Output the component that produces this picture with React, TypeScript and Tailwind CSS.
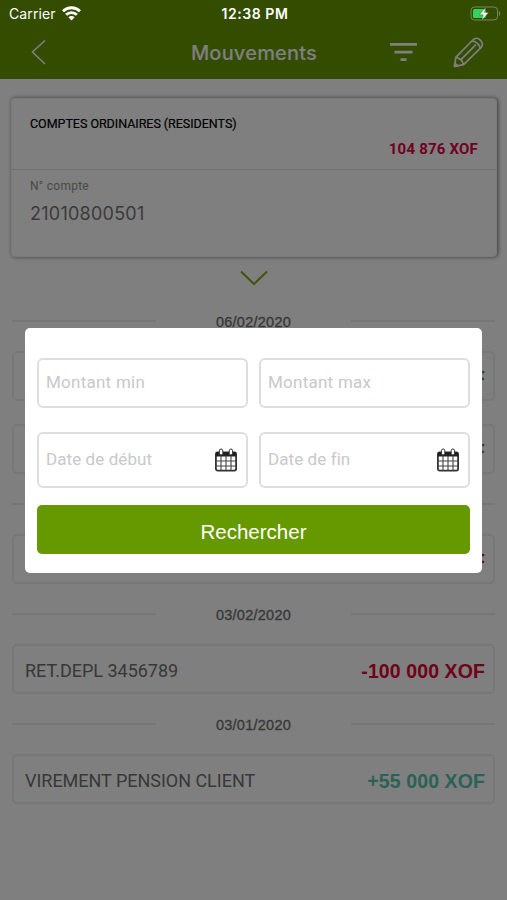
import type { ReactNode } from 'react';

type Movement = { label: string, amount: string, credit?: boolean, muted?: boolean };
type MovementGroup = { date: string, movements: Movement[] };

const groups: MovementGroup[] = [
  {
    date: '06/02/2020',
    movements: [
      { label: '', amount: 'F', muted: true },
      { label: '', amount: 'F', muted: true },
    ],
  },
  { date: '', movements: [{ label: '', amount: 'F' }] },
  { date: '03/02/2020', movements: [{ label: 'RET.DEPL 3456789', amount: '-100 000 XOF' }] },
  { date: '03/01/2020', movements: [{ label: 'VIREMENT PENSION CLIENT', amount: '+55 000 XOF', credit: true }] },
];

function StatusBar() {
  return (
    <div className="absolute inset-x-0 top-0 z-20 flex h-7 items-center justify-between pl-[9px] pr-[6px] font-['Inter',sans-serif] text-white">
      <div className="flex w-[120px] items-center gap-[6px]">
        <span className="text-[14px] leading-none tracking-[0.12px]">Carrier</span>
        <svg className="-mt-[2px]" width="19" height="15" viewBox="0 0 19 15" fill="none" stroke="currentColor" strokeWidth="2.8">
          <path d="M1 5.2a12.2 12.2 0 0 1 17 0" />
          <path d="M4.1 8.8a7.7 7.7 0 0 1 10.8 0" />
          <path d="M6.4 11.2a4.4 4.4 0 0 1 6.2 0L9.5 14.5z" fill="currentColor" stroke="none" />
        </svg>
      </div>
      <span className="text-[14px] font-semibold leading-none tracking-[0.55px]">12:38 PM</span>
      <div className="flex w-[120px] justify-end">
        <svg width="31" height="16" viewBox="0 0 31 16" fill="none">
          <rect x="1" y="1" width="26.5" height="13" rx="3.5" stroke="#78866a" />
          <path d="M29 5c1.6.8 1.6 4.2 0 5z" fill="#78866a" />
          <rect x="3" y="3" width="13" height="9" rx="1.5" fill="#2fd65a" />
          <path d="M15.6 1.4L9.4 8.8h3.8l-1.4 5.4 6.9-7.8h-4.2z" fill="#fff" stroke="#334d00" strokeWidth=".4" />
        </svg>
      </div>
    </div>
  );
}

function Header() {
  return (
    <header className="flex h-[79px] items-end bg-[#669900] text-white">
      <div className="flex h-[54px] w-full items-center justify-between pl-[31px] pr-[23px]">
        <svg className="w-[92px] shrink-0" height="26" viewBox="0 0 92 26" fill="none" stroke="currentColor" strokeWidth="1.6">
          <path d="M14 1.5L1.5 13 14 25" />
        </svg>
        <h1 className="-ml-[5px] mt-px font-['Inter',sans-serif] text-[20px] font-medium tracking-[0.2px]">Mouvements</h1>
        <div className="flex items-center gap-[35px]">
          <svg width="28" height="20" viewBox="0 0 28 20" fill="currentColor">
            <path d="M0 1h27v2.7H0zM4.5 8.7h18v2.7h-18zM10.5 16.3h6v2.7h-6z" />
          </svg>
          <svg width="31" height="31" viewBox="0 0 31 31" fill="none" stroke="currentColor" strokeWidth="1.7" strokeLinejoin="round">
            <path d="M1.5 29.3l1.3-9L19.8 3c2-2 5-2.2 7.2-.2 2.6 2.4 3.2 5.6 1.2 7.6L10.6 27.6z" />
            <path d="M2.8 20.3c3.6.6 6.8 3.2 7.8 7.3M7.8 22.8L22.9 7.7M19 3.9c4 .7 7.4 4 8.4 7.5" />
            <path d="M1.5 29.3l.4-3.2 2.7 2.7z" fill="currentColor" />
          </svg>
        </div>
      </div>
    </header>
  );
}

function AccountCard() {
  return (
    <section className="ml-[11px] mr-[10px] mt-[19px] h-[159px] rounded-[4px] border border-[#f4f4f4] bg-white font-['Roboto',sans-serif] shadow-[1px_0_4px_0_#777]">
      <div className="flex h-[71px] flex-col border-b border-[#dedede] px-[18px] pt-[15px]">
        <span className="text-[12.5px] leading-5 tracking-[-0.03px] text-black [-webkit-text-stroke:0.2px_#000]">COMPTES ORDINAIRES (RESIDENTS)</span>
        <span className="mt-[5px] self-end text-[15px] font-bold leading-5 tracking-[0.2px] text-[#e30045]">104 876 XOF</span>
      </div>
      <div className="flex flex-col px-[18px] pt-[8px]">
        <span className="text-[12px] leading-4 tracking-[0.25px] text-[#929292]">N° compte</span>
        <span className="mt-[8px] font-['Inter',sans-serif] text-[18px] leading-6 tracking-[0.25px] text-[#777]">21010800501</span>
      </div>
    </section>
  );
}

function DateSeparator({ date }: { date: string }) {
  return (
    <div className="flex h-5 items-center justify-between">
      <div className="h-[2px] w-[144px] bg-[#ededed]" />
      <span className="mt-[3px] font-['Liberation_Sans',sans-serif] text-[14.5px] tracking-[0.25px] text-[#707070] [-webkit-text-stroke:0.3px_#707070]">{date}</span>
      <div className="h-[2px] w-[144px] bg-[#ededed]" />
    </div>
  );
}

function MovementRow({ movement }: { movement: Movement }) {
  let color = 'text-[#e30034]';
  if (movement.credit) color = 'text-[#55c5aa]';
  if (movement.muted) color = 'text-[#777]';

  return (
    <div className="flex h-[50px] items-center justify-between rounded-[5px] border-2 border-[#efefef] pl-[11px] pr-[8px]">
      <span className="mt-[2px] font-['Roboto',sans-serif] text-[18px] tracking-[-0.02px] text-[#707070]">{movement.label}</span>
      <span className={`mt-[5px] font-['Liberation_Sans',sans-serif] text-[19.5px] font-bold tracking-[0.1px] ${color}`}>{movement.amount}</span>
    </div>
  );
}

function CalendarIcon() {
  return (
    <svg width="22" height="24" viewBox="0 0 22 24" fill="none">
      <rect x=".9" y="4.4" width="20.2" height="18.2" rx="1.8" fill="#fff" stroke="#333" strokeWidth="1.8" />
      <path d="M1 4h20v4.5H1z" fill="#222" />
      <path d="M6 8v14M11 8v14M16 8v14M1 13h20M1 18h20" stroke="#444" strokeWidth="1.1" />
      <rect x="4.4" y="1" width="3.4" height="6" rx="1.7" fill="#fff" stroke="#333" />
      <rect x="14.2" y="1" width="3.4" height="6" rx="1.7" fill="#fff" stroke="#333" />
    </svg>
  );
}

function Field({ label, children }: { label: string, children?: ReactNode }) {
  return (
    <div className={`flex w-[211px] items-center justify-between rounded-[6px] border-2 border-[#dedede] pl-[7px] pr-[9px] ${children ? 'h-[56px]' : 'h-[50px]'}`}>
      <span className={`font-['Roboto',sans-serif] text-[17px] text-[#c8c8cc] ${children ? 'tracking-[0.08px]' : 'tracking-[0.25px]'}`}>{label}</span>
      {children}
    </div>
  );
}

function SearchModal() {
  return (
    <div className="absolute inset-0 z-10 bg-black/50 pt-[328px]">
      <div className="mx-auto flex h-[245px] w-[457px] flex-col rounded-[5px] bg-white px-[12px] pt-[30px]">
        <div className="flex justify-between">
          <Field label="Montant min" />
          <Field label="Montant max" />
        </div>
        <div className="mt-[24px] flex justify-between">
          <Field label="Date de début"><CalendarIcon /></Field>
          <Field label="Date de fin"><CalendarIcon /></Field>
        </div>
        <button type="button" className="mt-[17px] h-[49px] rounded-[5px] bg-[#669900] pt-[5px] font-['Liberation_Sans',sans-serif] text-[20.5px] text-white">
          Rechercher
        </button>
      </div>
    </div>
  );
}

export default function App() {
  return (
    <div className="relative h-[900px] w-[507px] overflow-hidden bg-white">
      <Header />
      <AccountCard />
      <svg className="mx-auto mt-[13px]" width="28" height="16" viewBox="0 0 28 16" fill="none" stroke="#83aa18" strokeWidth="2">
        <path d="M1 1.5l13 12.5 13-12.5" />
      </svg>
      <main className="mt-[25px] flex flex-col gap-[20px] px-[12px]">
        {groups.map((group, index) => (
          <section key={index}>
            <DateSeparator date={group.date} />
            <div className="mt-[20px] flex flex-col gap-[23px]">
              {group.movements.map((movement, row) => (
                <MovementRow key={row} movement={movement} />
              ))}
            </div>
          </section>
        ))}
      </main>
      <SearchModal />
      <StatusBar />
    </div>
  );
}
